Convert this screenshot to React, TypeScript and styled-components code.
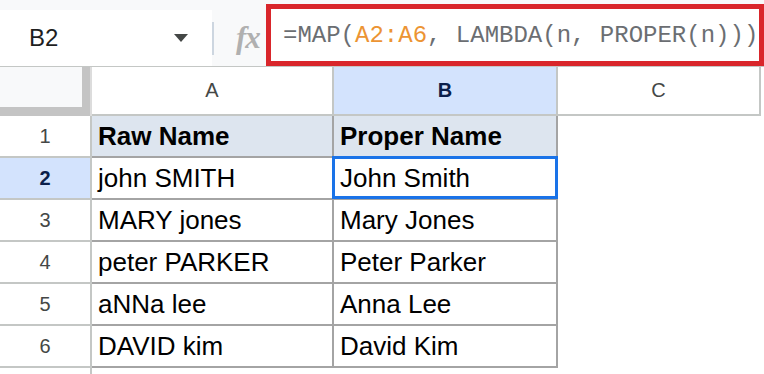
import { Fragment } from "react";
import styled, { createGlobalStyle } from "styled-components";

const GlobalStyle = createGlobalStyle`
  * {
    box-sizing: border-box;
  }
  body {
    margin: 0;
    background: #ffffff;
    font-family: "Liberation Sans", Arial, sans-serif;
  }
`;

const FormulaBar = styled.div`
  display: flex;
  align-items: flex-end;
  height: 67px;
  background: #f8f9fa;
  border-bottom: 1px solid #c4c7c5;
`;

const NameBox = styled.div`
  display: flex;
  align-items: center;
  width: 212px;
  height: 56px;
  padding-left: 29px;
  padding-right: 24px;
  background: #ffffff;
  font-size: 24px;
  color: #1f1f1f;
`;

const Caret = styled.span`
  margin-left: auto;
  width: 0;
  height: 0;
  border-left: 7px solid transparent;
  border-right: 7px solid transparent;
  border-top: 8px solid #444746;
`;

const Divider = styled.div`
  width: 2px;
  height: 33px;
  margin-bottom: 11px;
  background: #cdd6e0;
`;

const FxArea = styled.div`
  display: flex;
  align-items: center;
  width: 52px;
  height: 56px;
  padding-left: 22px;
  font-family: "Liberation Serif", "Times New Roman", serif;
  font-style: italic;
  font-weight: bold;
  font-size: 31px;
  color: #b0b0b0;
  letter-spacing: -1px;
`;

const FormulaBox = styled.div`
  flex: 1;
  display: flex;
  align-items: center;
  height: 62px;
  padding-left: 12px;
  border: 5px solid #d9262b;
  background: #ffffff;
  font-family: "Liberation Mono", "DejaVu Sans Mono", monospace;
  font-size: 24px;
  color: #6b6e72;
  white-space: pre;
`;

const RangeRef = styled.span`
  color: #ec9433;
`;

const Sheet = styled.div`
  display: grid;
  grid-template-columns: 92px 242px 224px 203px;
  grid-template-rows: 49px repeat(6, 42px) 6px;
`;

const headerLine = "#c4c7c5";
const tableLine = "#a4a4a4";

const Corner = styled.div`
  border-right: 2px solid #dcdcdc;
  background: #c4c4c4;
  padding: 0 8px 9px 0;
`;

const CornerFill = styled.div`
  width: 100%;
  height: 100%;
  background: #f8f9fa;
`;

const ColHeader = styled.div<{ $active?: boolean }>`
  display: flex;
  align-items: center;
  justify-content: center;
  border-right: 2px solid ${headerLine};
  border-bottom: 2px solid ${headerLine};
  background: ${(p) => (p.$active ? "#d3e3fd" : "#ffffff")};
  color: ${(p) => (p.$active ? "#0b1f4b" : "#444746")};
  font-weight: ${(p) => (p.$active ? "bold" : "normal")};
  font-size: 20px;
`;

const RowHeader = styled.div<{ $active?: boolean; $last?: boolean }>`
  display: flex;
  align-items: center;
  justify-content: center;
  border-right: 2px solid ${headerLine};
  border-bottom: ${(p) => (p.$last ? "none" : `2px solid ${headerLine}`)};
  background: ${(p) => (p.$active ? "#d3e3fd" : "#ffffff")};
  color: ${(p) => (p.$active ? "#0b1f4b" : "#444746")};
  font-weight: ${(p) => (p.$active ? "bold" : "normal")};
  font-size: 20px;
`;

const Cell = styled.div<{ $head?: boolean; $selected?: boolean }>`
  position: relative;
  display: flex;
  align-items: center;
  padding-left: 6px;
  border-right: 2px solid ${tableLine};
  border-bottom: 2px solid ${tableLine};
  background: ${(p) => (p.$head ? "#dde5ef" : "#ffffff")};
  font-weight: ${(p) => (p.$head ? "bold" : "normal")};
  font-size: 26px;
  color: #000000;
  white-space: nowrap;

  ${(p) =>
    p.$selected &&
    `
    &::after {
      content: "";
      position: absolute;
      top: -2px;
      left: -2px;
      right: -2px;
      bottom: -1px;
      border: 3px solid #1a73e8;
    }
  `}
`;

const Blank = styled.div``;

const rows = [
  ["Raw Name", "Proper Name"],
  ["john SMITH", "John Smith"],
  ["MARY jones", "Mary Jones"],
  ["peter PARKER", "Peter Parker"],
  ["aNNa lee", "Anna Lee"],
  ["DAVID kim", "David Kim"],
];

export default function App() {
  return (
    <>
      <GlobalStyle />
      <FormulaBar>
        <NameBox>
          B2
          <Caret />
        </NameBox>
        <Divider />
        <FxArea>fx</FxArea>
        <FormulaBox>
          =MAP(<RangeRef>A2:A6</RangeRef>, LAMBDA(n, PROPER(n)))
        </FormulaBox>
      </FormulaBar>
      <Sheet>
        <Corner>
          <CornerFill />
        </Corner>
        <ColHeader>A</ColHeader>
        <ColHeader $active>B</ColHeader>
        <ColHeader>C</ColHeader>
        {rows.map(([raw, proper], i) => (
          <Fragment key={i}>
            <RowHeader $active={i === 1}>{i + 1}</RowHeader>
            <Cell $head={i === 0}>{raw}</Cell>
            <Cell $head={i === 0} $selected={i === 1}>
              {proper}
            </Cell>
            <Blank />
          </Fragment>
        ))}
        <RowHeader $last />
        <Blank />
        <Blank />
        <Blank />
      </Sheet>
    </>
  );
}
